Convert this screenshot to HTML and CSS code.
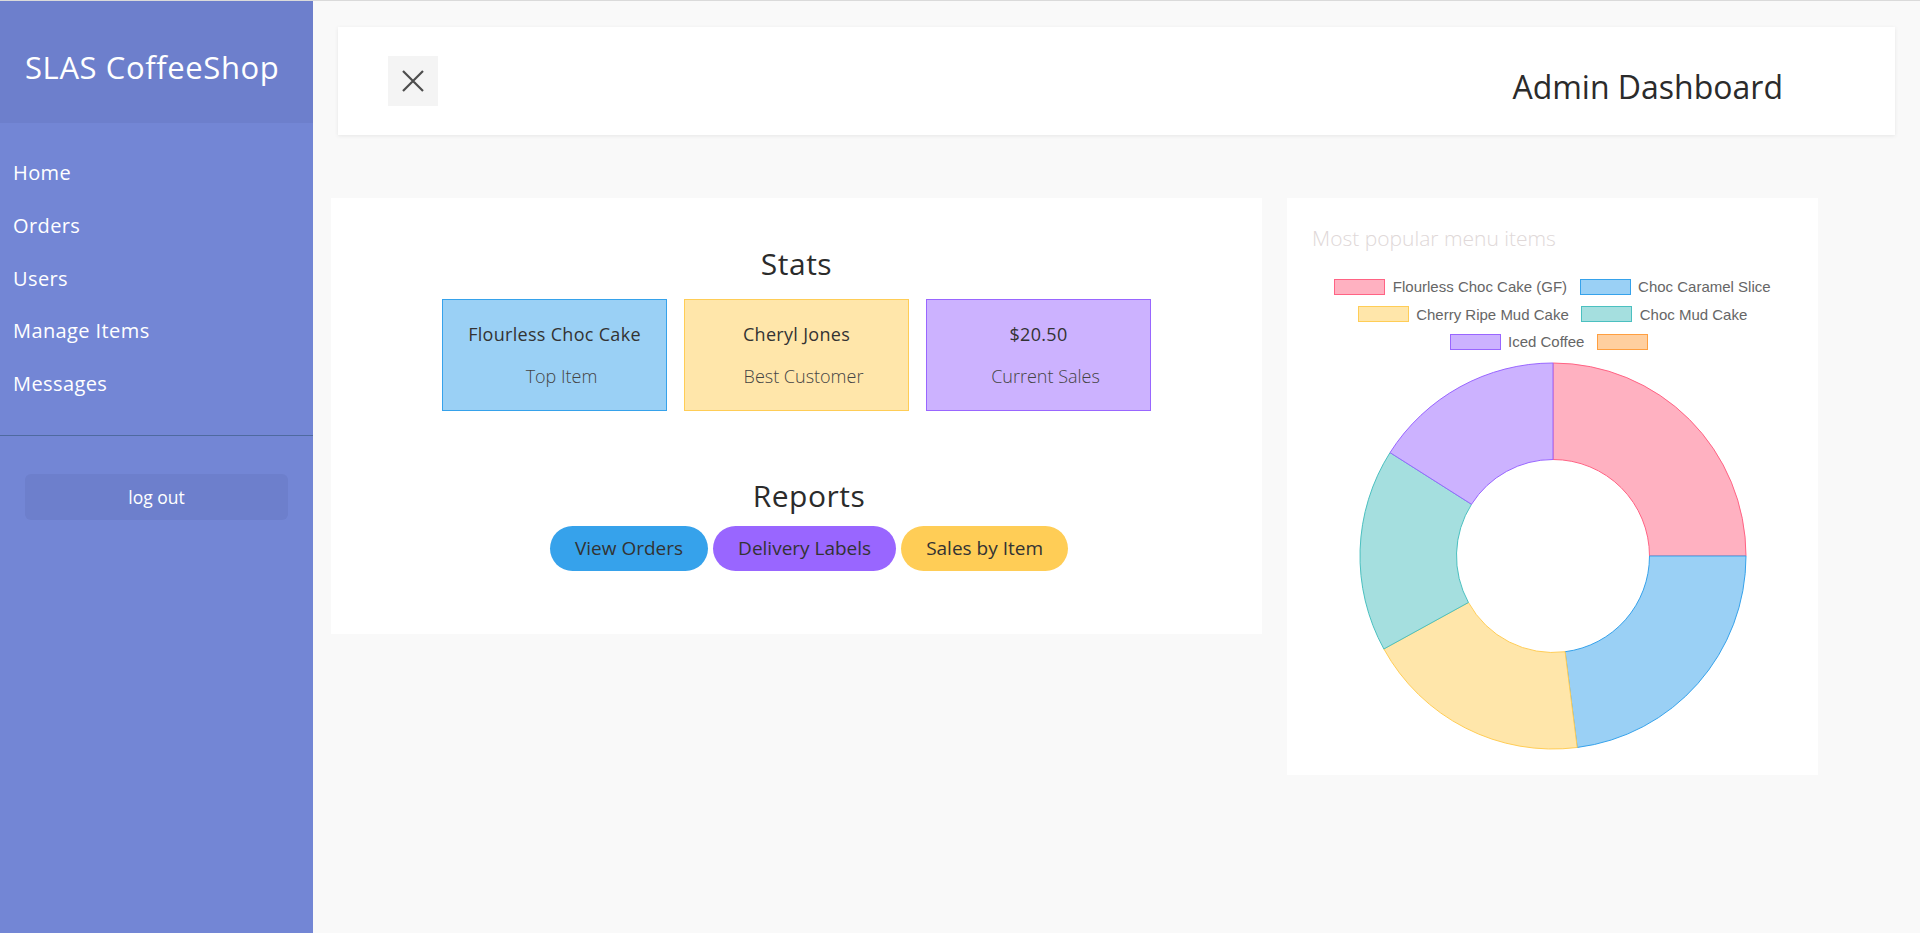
FILE: index.html
```html
<!DOCTYPE html>
<html lang="en">
<head>
<meta charset="utf-8">
<title>SLAS CoffeeShop - Admin Dashboard</title>
<link rel="stylesheet" href="styles.css">
</head>
<body>
<div class="layout">
  <aside class="sidebar">
    <div class="brand"><h1 class="brand-title">SLAS CoffeeShop</h1></div>
    <nav class="nav">
      <a class="nav-link" href="#">Home</a>
      <a class="nav-link" href="#">Orders</a>
      <a class="nav-link" href="#">Users</a>
      <a class="nav-link" href="#">Manage Items</a>
      <a class="nav-link" href="#">Messages</a>
    </nav>
    <hr class="divider">
    <div class="logout-wrap"><button class="logout" type="button">log out</button></div>
  </aside>

  <main class="main">
    <header class="topbar">
      <button class="close-btn" type="button" aria-label="Close menu">
        <svg width="22" height="22" viewBox="0 0 22 22"><path d="M1 1 L21 21 M21 1 L1 21" stroke="#4d4d4d" stroke-width="2.2" fill="none"/></svg>
      </button>
      <h2 class="page-title">Admin Dashboard</h2>
    </header>

    <div class="content">
      <section class="panel stats-panel">
        <h3 class="section-title">Stats</h3>
        <div class="stat-row">
          <div class="stat stat-blue">
            <div class="stat-value">Flourless Choc Cake</div>
            <div class="stat-label">Top Item</div>
          </div>
          <div class="stat stat-yellow">
            <div class="stat-value">Cheryl Jones</div>
            <div class="stat-label">Best Customer</div>
          </div>
          <div class="stat stat-purple">
            <div class="stat-value">$20.50</div>
            <div class="stat-label">Current Sales</div>
          </div>
        </div>
        <div class="reports">
          <h3 class="section-title">Reports</h3>
          <div class="btn-row">
            <button class="pill pill-blue" type="button">View Orders</button>
            <button class="pill pill-purple" type="button">Delivery Labels</button>
            <button class="pill pill-yellow" type="button">Sales by Item</button>
          </div>
        </div>
      </section>

      <section class="panel chart-panel">
        <div class="chart-title">Most popular menu items</div>
        <div class="legend">
          <div class="legend-row">
            <span class="legend-item"><span class="swatch sw-pink"></span><span class="legend-label">Flourless Choc Cake (GF)</span></span>
            <span class="legend-item"><span class="swatch sw-blue"></span><span class="legend-label">Choc Caramel Slice</span></span>
          </div>
          <div class="legend-row">
            <span class="legend-item"><span class="swatch sw-yellow"></span><span class="legend-label">Cherry Ripe Mud Cake</span></span>
            <span class="legend-item"><span class="swatch sw-teal"></span><span class="legend-label">Choc Mud Cake</span></span>
          </div>
          <div class="legend-row">
            <span class="legend-item"><span class="swatch sw-purple"></span><span class="legend-label">Iced Coffee</span></span>
            <span class="legend-item"><span class="swatch sw-orange"></span><span class="legend-label"></span></span>
          </div>
        </div>
        <svg class="donut" width="392" height="392" viewBox="-196 -196 392 392">
          <path d="M0 -193 A193 193 0 0 1 193 0 L96.5 0 A96.5 96.5 0 0 0 0 -96.5 Z" fill="#ffb1c1" stroke="#ff6384" stroke-width="1"/>
          <path d="M193 0 A193 193 0 0 1 24.19 191.48 L12.09 95.74 A96.5 96.5 0 0 0 96.5 0 Z" fill="#9ad0f5" stroke="#36a2eb" stroke-width="1"/>
          <path d="M24.19 191.48 A193 193 0 0 1 -169.13 92.98 L-84.56 46.49 A96.5 96.5 0 0 0 12.09 95.74 Z" fill="#ffe6aa" stroke="#ffcd56" stroke-width="1"/>
          <path d="M-169.13 92.98 A193 193 0 0 1 -162.96 -103.42 L-81.48 -51.71 A96.5 96.5 0 0 0 -84.56 46.49 Z" fill="#a5dfdf" stroke="#4bc0c0" stroke-width="1"/>
          <path d="M-162.96 -103.42 A193 193 0 0 1 0 -193 L0 -96.5 A96.5 96.5 0 0 0 -81.48 -51.71 Z" fill="#ccb2ff" stroke="#9966ff" stroke-width="1"/>
        </svg>
      </section>
    </div>
  </main>
</div>
</body>
</html>
```
FILE: styles.css
```css
* { box-sizing: border-box; }

html, body {
  margin: 0;
  padding: 0;
}

body {
  background: #f9f9f9;
  border-top: 1px solid #dadada;
  font-family: "Open Sans", "Liberation Sans", sans-serif;
  color: #333;
}

.layout {
  display: flex;
  min-height: 932px;
}

/* Sidebar */
.sidebar {
  width: 313px;
  flex: 0 0 313px;
  background: #7386d5;
  color: #fff;
}

.brand {
  height: 122px;
  background: #6d7fcc;
  padding: 46px 0 0 25px;
}

.brand-title {
  margin: 0;
  font-size: 31px;
  line-height: 40px;
  font-weight: 500;
  letter-spacing: 0.6px;
  color: #fff;
  white-space: nowrap;
}

.nav {
  padding-top: 24px;
}

.nav-link {
  display: block;
  padding: 14.35px 0 14.35px 13px;
  font-size: 20px;
  line-height: 24px;
  letter-spacing: 0.4px;
  color: #fff;
  text-decoration: none;
}

.divider {
  margin: 24.5px 0 0 0;
  border: 0;
  border-top: 1px solid #4f6aa0;
  height: 0;
}

.logout-wrap {
  padding: 38px 25px 0 25px;
}

.logout {
  display: block;
  width: 263px;
  height: 46.5px;
  border: 0;
  border-radius: 6px;
  background: #6d7fcc;
  color: #fff;
  font-family: inherit;
  font-size: 17.5px;
  cursor: pointer;
}

/* Main */
.main {
  flex: 1;
}

.topbar {
  margin: 26px 25px 0 25px;
  height: 108px;
  background: #fff;
  box-shadow: 0 1px 4px rgba(0, 0, 0, 0.08);
  display: flex;
  align-items: center;
  justify-content: space-between;
  padding: 0 112px 0 50px;
}

.close-btn {
  width: 50px;
  height: 50px;
  border: 0;
  background: #f4f4f4;
  display: flex;
  align-items: center;
  justify-content: center;
  padding: 0;
  cursor: pointer;
}

.page-title {
  margin: 11px 0 0 0;
  font-size: 32px;
  line-height: 40px;
  font-weight: 500;
  color: #2b2b2b;
}

.content {
  display: flex;
  align-items: flex-start;
  gap: 25px;
  padding: 63px 0 0 18px;
}

.panel {
  background: #fff;
}

/* Stats panel */
.stats-panel {
  width: 931px;
  padding: 48px 0 63px 0;
  text-align: center;
}

.section-title {
  margin: 0;
  font-size: 30px;
  line-height: 36px;
  font-weight: 500;
  letter-spacing: 0.5px;
  color: #2b2b2b;
}

.stat-row {
  display: flex;
  justify-content: center;
  gap: 17px;
  margin-top: 17px;
}

.stat {
  width: 225px;
  height: 112px;
  border: 1px solid;
  padding-top: 22px;
}

.stat-blue { background: #9ad0f5; border-color: #36a2eb; }
.stat-yellow { background: #ffe6aa; border-color: #ffcd56; }
.stat-purple { background: #ccb2ff; border-color: #9966ff; }

.stat-value {
  font-size: 18px;
  line-height: 24px;
  font-weight: 500;
  letter-spacing: 0.3px;
  color: #333;
}

.stat-label {
  margin-top: 18px;
  padding-left: 14px;
  font-size: 18px;
  line-height: 24px;
  font-weight: 300;
  color: #444;
}

.reports {
  margin-top: 67px;
  padding-left: 25px;
}

.btn-row {
  display: flex;
  justify-content: center;
  gap: 5px;
  margin-top: 11.6px;
}

.pill {
  height: 45px;
  border: 0;
  border-radius: 22.5px;
  padding: 0 25px;
  font-family: inherit;
  font-size: 19px;
  color: #333;
  cursor: pointer;
}

.pill-blue { background: #36a2eb; }
.pill-purple { background: #9966ff; }
.pill-yellow { background: #ffcd56; }

/* Chart panel */
.chart-panel {
  width: 531px;
  height: 577px;
  padding: 26px 25px 0 25px;
  display: flex;
  flex-direction: column;
}

.chart-title {
  font-size: 21px;
  line-height: 28px;
  font-weight: 300;
  color: #e0d8d8;
}

.legend {
  margin-top: 21px;
  font-family: "Liberation Sans", Arial, sans-serif;
  font-size: 15px;
  color: #666;
}

.legend-row {
  height: 27.5px;
  display: flex;
  justify-content: center;
  align-items: center;
  gap: 12.5px;
}

.legend-item {
  display: flex;
  align-items: center;
}

.swatch {
  width: 51px;
  height: 16px;
  border: 1.5px solid;
}

.legend-label {
  margin-left: 7.5px;
  white-space: nowrap;
}

.sw-pink { background: #ffb1c1; border-color: #ff6384; }
.sw-blue { background: #9ad0f5; border-color: #36a2eb; }
.sw-yellow { background: #ffe6aa; border-color: #ffcd56; }
.sw-teal { background: #a5dfdf; border-color: #4bc0c0; }
.sw-purple { background: #ccb2ff; border-color: #9966ff; }
.sw-orange { background: #ffcf9f; border-color: #ff9f40; }

.donut {
  display: block;
  margin: 4.65px auto 0 auto;
}
```
